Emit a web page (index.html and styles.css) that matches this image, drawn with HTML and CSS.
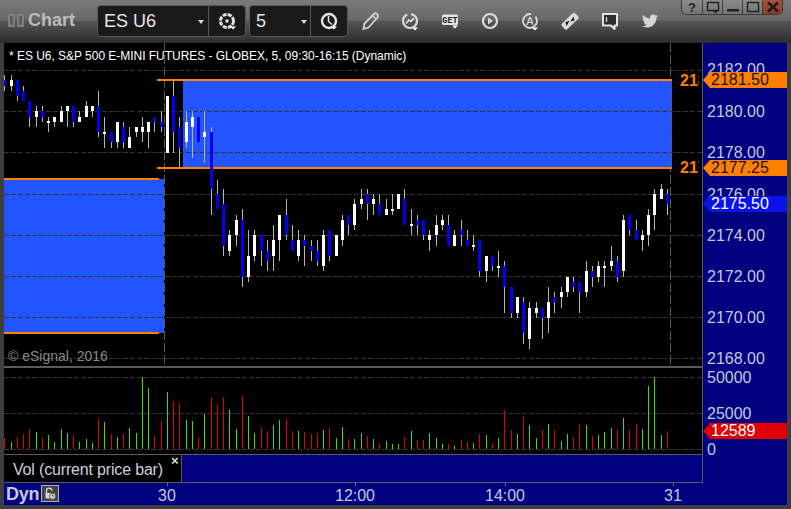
FILE: index.html
```html
<!DOCTYPE html>
<html lang="en">
<head>
<meta charset="utf-8">
<title>ES U6 Chart</title>
<link rel="stylesheet" href="styles.css">
</head>
<body>
<div class="window">
  <header class="toolbar">
    <div class="grip"><span></span><span></span></div>
    <div class="app-title">Chart</div>
    <div class="combo combo-symbol">
      <span class="combo-value">ES U6</span>
      <span class="combo-arrow"></span>
      <span class="combo-btn">
        <svg width="24" height="24" viewBox="0 0 24 24"><circle cx="12" cy="12" r="6.5" fill="none" stroke="#e4e4e4" stroke-width="3" stroke-dasharray="4 1.1"/><circle cx="12" cy="12" r="1.8" fill="#e4e4e4"/><path d="M15 17.500h6l-3 3z" fill="#fff"/></svg>
      </span>
    </div>
    <div class="combo combo-interval">
      <span class="combo-value">5</span>
      <span class="combo-arrow"></span>
      <span class="combo-btn">
        <svg width="24" height="24" viewBox="0 0 24 24"><circle cx="12" cy="12" r="7" fill="none" stroke="#e4e4e4" stroke-width="2.400"/><path d="M11.500 7v5.500l3.500 3" fill="none" stroke="#e4e4e4" stroke-width="1.500"/><path d="M14 17.500h6l-3 3z" fill="#fff"/></svg>
      </span>
    </div>
    <div class="tools">
      <svg width="40" height="24" viewBox="0 0 40 24"><path d="M13.500 20l1-5.500L24 5c1-1 2-1 3 0l.5.500c1 1 1 2 0 3L18.500 18.500z" fill="none" stroke="#d0d0d0" stroke-width="1.800"/><path d="M22.500 6.500l3.500 3.500" stroke="#d0d0d0" stroke-width="1.500"/></svg>
      <svg width="40" height="24" viewBox="0 0 40 24"><circle cx="20" cy="12" r="7" fill="none" stroke="#dcdcdc" stroke-width="2.200" stroke-dasharray="30 4"/><path d="M16 14.500l3-3.500 2 1.500 3-3.500" fill="none" stroke="#e8e8e8" stroke-width="1.500"/><path d="M22 18.500h6l-3 3z" fill="#fff"/></svg>
      <svg width="40" height="24" viewBox="0 0 40 24"><rect x="12" y="5.500" width="16" height="10.500" rx="1.500" fill="#e4e4e4"/><text x="20" y="13.800" class="get-text">GET</text><path d="M22 16.500h6l-3 3z" fill="#fff"/></svg>
      <svg width="40" height="24" viewBox="0 0 40 24"><circle cx="20" cy="12" r="7" fill="none" stroke="#dcdcdc" stroke-width="2.200"/><path d="M18 8.500v7l5-3.500z" fill="#dcdcdc"/></svg>
      <svg width="40" height="24" viewBox="0 0 40 24"><circle cx="20" cy="12" r="7" fill="none" stroke="#dcdcdc" stroke-width="1.800" stroke-dasharray="34 5"/><text x="20" y="16" class="a-text">A</text><path d="M22 18.500h6l-3 3z" fill="#fff"/></svg>
      <svg width="40" height="24" viewBox="0 0 40 24"><path d="M12 14.500L22.500 4.500c1-1 2-1 3 0l2.500 2.500c1 1 1 2 0 3L17.500 20c-1 1-2 1-3 0l-2.500-3c-.8-1-.8-1.500 0-2.500z" fill="#d8d8d8"/><path d="M16.500 17l3-5-4 1zM23.500 7.500l-3 5 4-1z" fill="#111"/></svg>
      <svg width="40" height="24" viewBox="0 0 40 24"><path d="M13 5h14v11.500h-2.500V20l-3.500-3.500H13z" fill="#2c2c2c" stroke="#e4e4e4" stroke-width="2" stroke-linejoin="round"/><path d="M16.500 8v5" stroke="#e4e4e4" stroke-width="1.300"/></svg>
      <svg width="40" height="24" viewBox="-18 -6 60 36"><path fill="#d4d4d4" d="M23.953 4.570a10 10 0 01-2.825.775 4.958 4.958 0 002.163-2.723c-.951.555-2.005.959-3.127 1.184a4.920 4.920 0 00-8.384 4.482C7.690 8.095 4.067 6.130 1.640 3.162a4.822 4.822 0 00-.666 2.475c0 1.710.870 3.213 2.188 4.096a4.904 4.904 0 01-2.228-.616v.060a4.923 4.923 0 003.946 4.827 4.996 4.996 0 01-2.212.085 4.936 4.936 0 004.604 3.417 9.867 9.867 0 01-6.102 2.105c-.390 0-.779-.023-1.170-.067a13.995 13.995 0 007.557 2.209c9.053 0 13.998-7.496 13.998-13.985 0-.210 0-.420-.015-.630A9.935 9.935 0 0024 4.590z"/></svg>
    </div>
    <div class="win-buttons">
      <span class="win-btn win-help">?</span>
      <span class="win-btn"><svg width="16" height="14" viewBox="0 0 16 14"><rect x="2.500" y="2.500" width="11" height="8" fill="none" stroke="#222" stroke-width="1.500"/><path d="M7 10h7l-3.500 3.500z" fill="#222"/></svg></span>
      <span class="win-btn"><svg width="16" height="14" viewBox="0 0 16 14"><rect x="2" y="9" width="12" height="2.500" fill="#222"/></svg></span>
      <span class="win-btn"><svg width="16" height="14" viewBox="0 0 16 14"><rect x="2.500" y="2.500" width="11" height="9" fill="none" stroke="#222" stroke-width="1.500"/></svg></span>
      <span class="win-btn win-close"><svg width="16" height="14" viewBox="0 0 16 14"><path d="M3 2.500l10 9M13 2.500l-10 9" stroke="#1c1c1c" stroke-width="2.800"/></svg></span>
    </div>
  </header>

  <main class="chart">
    <div class="plots">
      <section class="price-panel">
        <svg id="price-svg" class="plot-svg" width="698" height="323" viewBox="4 43 698 323"></svg>
        <div class="chart-title">* ES U6, S&amp;P 500 E-MINI FUTURES - GLOBEX, 5, 09:30-16:15 (Dynamic)</div>
        <div class="copyright">© eSignal, 2016</div>
        <div class="level-label level-high">2181.50</div>
        <div class="level-label level-low">2177.25</div>
      </section>
      <section class="volume-panel">
        <svg id="volume-svg" class="plot-svg" width="698" height="86" viewBox="4 368 698 86"></svg>
      </section>
      <section class="legend-row">
        <div class="legend-label">Vol (current price bar)<span class="legend-close">×</span></div>
        <div class="legend-fill"></div>
      </section>
    </div>
    <aside class="axis">
      <span class="axis-label" style="top:69px">2182.00</span>
      <span class="axis-label" style="top:111px">2180.00</span>
      <span class="axis-label" style="top:152px">2178.00</span>
      <span class="axis-label" style="top:194px">2176.00</span>
      <span class="axis-label" style="top:235px">2174.00</span>
      <span class="axis-label" style="top:276px">2172.00</span>
      <span class="axis-label" style="top:317px">2170.00</span>
      <span class="axis-label" style="top:358px">2168.00</span>
      <span class="axis-label" style="top:377px">50000</span>
      <span class="axis-label" style="top:413px">25000</span>
      <span class="axis-label" style="top:449px">0</span>
      <span class="tag tag-orange" style="top:72px">2181.50</span>
      <span class="tag tag-orange" style="top:160px">2177.25</span>
      <span class="tag tag-blue" style="top:196px">2175.50</span>
      <span class="tag tag-red" style="top:423px">12589</span>
    </aside>
    <footer class="time-axis">
      <div class="dyn">Dyn</div>
      <span class="lock-box">
        <svg width="18" height="17" viewBox="0 0 18 17"><path d="M5 8V5.500a3 3 0 016 0" fill="none" stroke="#ddd" stroke-width="1.500"/><rect x="4" y="8" width="7" height="6" fill="#ddd"/><circle cx="12" cy="11.500" r="3.500" fill="#ddd" stroke="#444"/><path d="M12 9.500v2h1.500" fill="none" stroke="#333"/></svg>
      </span>
      <span class="time-label" style="left:167px">30</span>
      <span class="time-label" style="left:355px">12:00</span>
      <span class="time-label" style="left:505px">14:00</span>
      <span class="time-label" style="left:673px">31</span>
    </footer>
  </main>
</div>
<script src="chart.js"></script>
</body>
</html>
```
FILE: styles.css
```css
* { box-sizing: border-box; }
html, body { margin: 0; padding: 0; background: #3c3c3c; }
body { font-family: "Liberation Sans", Arial, sans-serif; }

.window { width: 791px; height: 509px; position: relative; overflow: hidden; background: #3e3e3e; }

.toolbar {
  height: 43px;
  display: flex;
  align-items: flex-start;
  position: relative;
  background: linear-gradient(to bottom, #7a7a7a 0, #686868 20px, #565656 21px, #2c2c2c 43px);
}
.grip { display: flex; gap: 2px; margin: 14px 0 0 8px; }
.grip span { width: 7px; height: 13px; border: 2px solid #7e7e7e; background: #5e5e5e; }
.app-title { font-size: 18px; font-weight: bold; color: #bcbcbc; margin: 10px 0 0 4px; width: 69px; line-height: 21px; }

.combo {
  height: 32px;
  margin-top: 5px;
  display: flex;
  align-items: center;
  position: relative;
  background: #1a1a1a;
  border: 1px solid #585858;
  border-radius: 4px;
}
.combo-symbol { width: 149px; }
.combo-interval { width: 99px; margin-left: 3px; }
.combo-value { font-size: 18px; color: #e4e4e4; margin-left: 6px; }
.combo-arrow {
  position: absolute;
  border-top: 4px solid #d8d8d8;
  border-left: 3px solid transparent;
  border-right: 3px solid transparent;
  top: 14px;
}
.combo-symbol .combo-arrow { left: 100px; }
.combo-interval .combo-arrow { left: 51px; }
.combo-btn {
  margin-left: auto;
  width: 37px;
  height: 100%;
  border-left: 1px solid #585858;
  display: flex;
  align-items: center;
  justify-content: center;
}
.tools { display: flex; margin: 9px 0 0 2px; }
.tools svg { display: block; }
.get-text { font: bold 8.5px "Liberation Mono", monospace; fill: #222; text-anchor: middle; }
.a-text { font: 11px "Liberation Sans", sans-serif; fill: #e4e4e4; text-anchor: middle; }

.win-buttons {
  position: absolute;
  left: 681px;
  top: 0;
  height: 15px;
  display: flex;
  border: 1px solid #3a3a3a;
  border-top: 0;
  border-radius: 0 0 5px 5px;
  overflow: hidden;
  background: linear-gradient(to bottom, #8c8c8c, #747474);
}
.win-btn {
  width: 20px;
  height: 14px;
  display: flex;
  align-items: center;
  justify-content: center;
  border-left: 1px solid #3e3e3e;
  font-size: 13px;
  font-weight: bold;
  color: #222;
}
.win-help { border-left: 0; }
.win-close { background: linear-gradient(to bottom, #a8543c, #8a3a26); }

.chart {
  height: 462px;
  margin: 0 4px;
  display: grid;
  grid-template-columns: 699px 84px;
  grid-template-rows: 440px 22px;
  background: #000080;
}
.plots { display: flex; flex-direction: column; border-right: 1px solid #5a5a5a; }
.price-panel { height: 323px; position: relative; background: #000; overflow: hidden; }
.volume-panel { height: 88px; background: #000; border-top: 2px solid #5a5a5a; }
.plot-svg { display: block; shape-rendering: crispEdges; }
.legend-row { height: 29px; display: flex; border-top: 1px solid #5a5a5a; border-bottom: 1px solid #5a5a5a; }
.legend-label {
  width: 178px;
  background: #000;
  border-right: 1px solid #5a5a5a;
  color: #c8d0de;
  font-size: 16px;
  line-height: 27px;
  padding: 1px 0 0 9px;
  position: relative;
  letter-spacing: -.17px;
  white-space: nowrap;
}
.legend-close { position: absolute; left: 167px; top: -8px; font-size: 13px; font-weight: bold; color: #ddd; letter-spacing: 0; }
.legend-fill { flex: 1; background: #000080; }

.chart-title { position: absolute; left: 5px; top: 6px; font-size: 12px; line-height: 14px; color: #fff; white-space: nowrap; letter-spacing: -.03px; }
.copyright { position: absolute; left: 4px; top: 305px; font-size: 14px; line-height: 16px; color: #8a8a8a; white-space: nowrap; }
.level-label {
  position: absolute;
  left: 676px;
  width: 19px;
  height: 18px;
  overflow: hidden;
  font-size: 16px;
  font-weight: bold;
  line-height: 18px;
  color: #ff8000;
  white-space: nowrap;
}
.level-high { top: 29px; }
.level-low { top: 116px; }

.axis { position: relative; background: #000080; }
.axis-label {
  position: absolute;
  left: 4px;
  margin-top: -42px;
  transform: translateY(-50%);
  font-size: 16px;
  line-height: 18px;
  color: #c4c8d8;
  white-space: nowrap;
}
.tag {
  position: absolute;
  left: 7px;
  right: 0;
  height: 16px;
  margin-top: -43px;
  padding-left: 1px;
  font-size: 16px;
  line-height: 16px;
  white-space: nowrap;
}
.tag::before {
  content: "";
  position: absolute;
  left: -7px;
  top: 0;
  border-top: 8px solid transparent;
  border-bottom: 8px solid transparent;
  border-right: 7px solid currentColor;
}
.tag-orange { background: #ff8000; color: #201000; }
.tag-orange::before { border-right-color: #ff8000; }
.tag-blue { background: #0a14e8; color: #fff; }
.tag-blue::before { border-right-color: #0a14e8; }
.tag-red { background: #e00000; color: #fff; }
.tag-red::before { border-right-color: #e00000; }

.time-axis {
  grid-column: 1 / 3;
  position: relative;
  display: flex;
  align-items: center;
  background: #000080;
}
.dyn { font-size: 18px; font-weight: bold; color: #c8c8d8; margin-left: 2px; width: 36px; letter-spacing: -.2px; }
.lock-box { width: 18px; height: 17px; border: 1px solid #b0b0b0; background: #444; display: flex; align-items: center; justify-content: center; margin-top: -1px; margin-left: -1px; }
.time-label {
  position: absolute;
  top: 3px;
  transform: translateX(-50%);
  margin-left: -4px;
  font-size: 16px;
  line-height: 20px;
  color: #c4c8d8;
}
.time-label::before {
  content: "";
  position: absolute;
  left: 50%;
  top: -3px;
  width: 1px;
  height: 3px;
  background: #7a7a7a;
}
```
FILE: chart.js
```js
// Candles as [kind, wickTop, wickBottom, bodyTop, bodyBottom], measured at 3x.
var SET_A = "b15,63,30,48 w15,63,30,48 b30,93,30,78 b48,93,63,93 b93,171,93,141 w108,171,123,141 b108,156,123,141 w141,186,153,159 w141,171,141,156 w108,156,123,156 w108,171,108,123 b108,171,108,156 w123,156,141,156 w93,141,108,141 w108,141,108,123 b63,201,108,186 w141,234,186,192 b186,234,186,216 w156,234,156,216 b156,234,171,216 w171,234,201,234 w171,201,171,186 w141,216,171,186 w156,234,156,186 b141,186,141,156 b123,186,156,171 w78,249,78,249 b30,249,78,186 b141,291,171,234 w123,234,156,216 w123,264,141,171 b141,216,141,216 w123,279,186,201 b171,435,186,357";
var SET_B = "b0,87,42,87 b27,228,72,198 w150,228,165,213 w105,198,120,165 b87,321,120,291 w150,306,228,291 w150,243,165,228 b165,258,165,213 b180,273,213,243 w135,273,180,228 w105,243,105,180 b57,180,105,165 b135,213,180,213 w150,243,180,228 b165,258,180,198 b180,243,198,213 b180,258,213,243 w150,273,165,258 b150,243,150,228 w165,228,165,228 w105,198,120,180 b105,165,105,135 w57,150,72,135 w27,87,57,72 b27,120,42,72 w42,105,57,72 b42,105,72,105 w57,105,87,105 w42,105,87,93 w42,87,42,87 b27,135,57,135 w87,165,132,138 b105,165,120,135 b120,180,120,165 w150,213,165,180 w105,198,135,165 w105,150,120,135 b105,198,135,198 w150,198,165,198 b120,198,150,165 b150,198,180,198 " +
  "w165,213,195,201 b180,291,180,273 w228,306,228,273 b228,273,228,258 w213,291,258,264 b243,399,258,321 b321,414,321,399 w351,414,351,399 b351,492,366,459 w366,507,384,477 w366,414,384,399 b384,477,384,414 w321,459,366,414 b336,399,351,366 w321,384,336,351 w291,351,291,336 b291,336,306,321 b306,399,306,336 w243,351,273,336 b258,321,273,291 w243,306,258,291 w243,321,258,264 w198,273,243,258 b228,306,243,291 w105,291,120,273 b105,165,105,150 b120,180,150,180 w150,213,165,180 w87,198,105,165 w27,150,42,105 w12,57,27,57 b27,105,42,72";
// Volume tops, measured at 3x.
var VOL_A = "r294 g306 r291 r282 r267 g276 r294 g285 g306 g267 g279 r288 g306 g297 g309 r237 g246 r282 g291 r282 g264 g279 g111 g144 r288 r243 g156 r183 r189 g240 g243 r291 g222 r174 r192 r171 g210 g267 r168 g228 g279";
var VOL_B = "r201 r213 g195 g180 r177 r213 g213 r216 r222 r219 g210 r204 g234 g201 r237 g237 g219 r228 g237 r249 g243 g252 g252 r231 g213 r240 r240 g219 g234 g252 r252 g258 r240 r246 g249 r222 g225 r249 g234 r150 r210 g222 r171 g195 g234 r210 g192 r210 g243 g222 r231 r195 g195 r228 g225 g216 g204 r210 g174 r210 r192 g207 g78 g51 g225 r213";

var NS = "http://www.w3.org/2000/svg";
var BLUE = "#0000ee", WICK = "#b4b4b4", ORANGE = "#ff8000", ZONE = "#2255ff", GRID = "#333333", VGRID = "#5a5a5a";

function el(parent, tag, attrs) {
  var node = document.createElementNS(NS, tag);
  for (var k in attrs) node.setAttribute(k, attrs[k]);
  parent.appendChild(node);
  return node;
}
function rect(p, x, y, w, h, fill) { el(p, "rect", { x: x, y: y, width: w, height: h, fill: fill }); }
function barX(i) { return Math.floor(4.75 + 6.25 * i); }

var price = document.getElementById("price-svg");
rect(price, 4, 179, 160, 154, ZONE);
rect(price, 183, 81, 489, 86, ZONE);
[70, 111, 152, 194, 235, 276, 317, 358].forEach(function (y) {
  el(price, "line", { x1: 4, x2: 702, y1: y + .5, y2: y + .5, stroke: GRID, "stroke-dasharray": "5 2" });
});
[164, 670].forEach(function (x) {
  el(price, "line", { x1: x + .5, x2: x + .5, y1: 43, y2: 366, stroke: VGRID, "stroke-dasharray": "9 3" });
});
rect(price, 4, 178, 155, 2, ORANGE);
rect(price, 4, 332, 155, 2, ORANGE);
rect(price, 157, 79, 515, 2, ORANGE);
rect(price, 157, 167, 515, 2, ORANGE);

function drawCandles(str, off, start) {
  str.trim().split(/\s+/).forEach(function (item, n) {
    var v = item.slice(1).split(",").map(function (z) { return Math.round(off + Number(z) / 3); });
    var x = barX(start + n);
    rect(price, x, v[0], 1, v[1] - v[0], WICK);
    rect(price, x - 1, v[2], 3, Math.max(v[3] - v[2], 2), item[0] === "b" ? BLUE : "#ffffff");
  });
}
drawCandles(SET_A, 70, 0);
drawCandles(SET_B, 180, 34);

var vol = document.getElementById("volume-svg");
[377, 413, 449].forEach(function (y) {
  el(vol, "line", { x1: 4, x2: 702, y1: y + .5, y2: y + .5, stroke: GRID, "stroke-dasharray": "5 2" });
});
function drawVolume(str, off, start) {
  str.trim().split(/\s+/).forEach(function (item, n) {
    var top = Math.round(off + Number(item.slice(1)) / 3);
    rect(vol, barX(start + n), top, 1, 449 - top, item[0] === "r" ? "#e00000" : "#44dd00");
  });
}
drawVolume(VOL_A, 340, 0);
drawVolume(VOL_B, 360, 41);
```
